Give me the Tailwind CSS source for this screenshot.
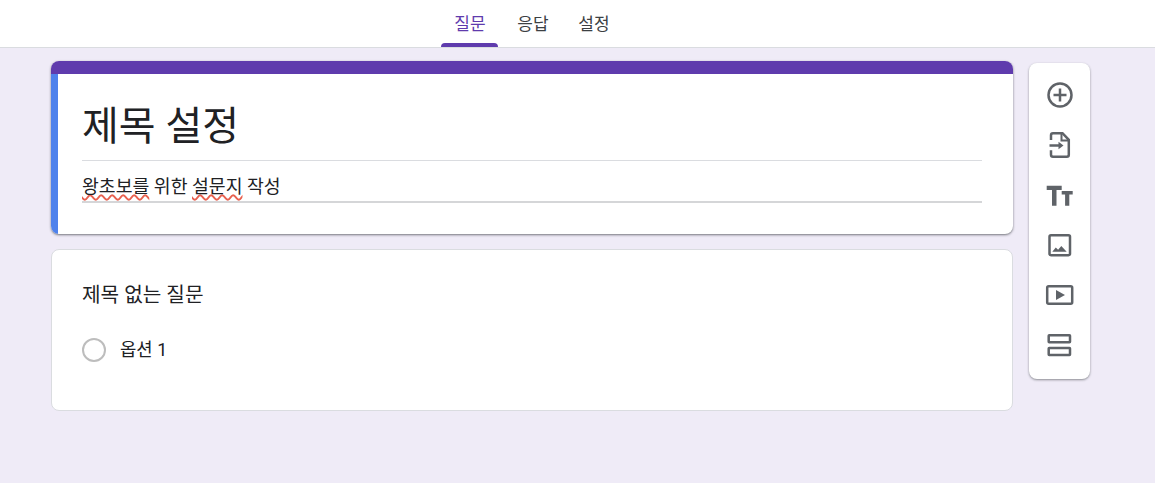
<!DOCTYPE html>
<html lang="ko">
<head>
  <meta charset="UTF-8">
  <title>제목 설정</title>
  <script src="https://cdn.jsdelivr.net/npm/@tailwindcss/browser@4"></script>
</head>
<body class="bg-[#efebf7] h-screen overflow-hidden font-['Roboto','Noto_Sans_CJK_KR',sans-serif] text-[#202124]">

  <!-- Tabs -->
  <header class="bg-white h-[48px] border-b border-[#dadce0] flex justify-center pr-[91px]">
    <nav class="flex gap-[6px]">
      <a class="relative h-[47px] w-[57px] flex justify-center pt-[13px] pl-[2px] text-[17px] leading-[22px] text-[#5f3bad]">질문<span class="absolute bottom-0 left-0 right-0 h-[4px] rounded-t-[4px] bg-[#5f3bad]"></span></a>
      <a class="h-[47px] w-[57px] flex justify-center pt-[13px] pl-[2px] text-[17px] leading-[22px] text-[#3c4043]">응답</a>
      <a class="h-[47px] w-[57px] flex justify-center pt-[13px] pr-[2px] text-[17px] leading-[22px] text-[#3c4043]">설정</a>
    </nav>
  </header>

  <main class="flex items-start pl-[51px] pt-[13px] gap-[16px]">
    <div class="w-[962px] flex flex-col gap-[15px]">

      <!-- Title card -->
      <section class="rounded-[8px] overflow-hidden bg-white shadow-[0_1px_2px_rgba(60,64,67,0.5),0_1px_3px_rgba(60,64,67,0.25)]">
        <div class="h-[13px] bg-[#5f3bad]"></div>
        <div class="h-[160px] border-l-[7px] border-[#4f82ec] pl-[24px] pr-[31px]">
          <h1 class="h-[87px] border-b border-[#dadce0] pt-[30px] text-[40px] leading-[46px] font-normal">제목 설정</h1>
          <p class="h-[42px] border-b-2 border-[#d5d6d8] pt-[14px] text-[18.300px] leading-[24px]"><span class="underline decoration-wavy decoration-[#e8604f] decoration-[1.500px] underline-offset-1">왕초보를</span> 위한 <span class="underline decoration-wavy decoration-[#e8604f] decoration-[1.500px] underline-offset-1">설문지</span> 작성</p>
        </div>
      </section>

      <!-- Question card -->
      <section class="h-[162px] rounded-[8px] bg-white border border-[#dadce0] pl-[30px] pt-[33px]">
        <h2 class="text-[20.200px] leading-[24px] font-normal">제목 없는 질문</h2>
        <div class="flex items-center mt-[31px] gap-[14px]">
          <span class="w-[24px] h-[24px] rounded-full border-2 border-[#bdbdbd]"></span>
          <span class="text-[17.800px] leading-[24px]">옵션 1</span>
        </div>
      </section>
    </div>

    <!-- Floating toolbar -->
    <aside class="mt-[2px] w-[61px] h-[316px] pt-[7px] pl-px rounded-[8px] bg-white flex flex-col items-center shadow-[0_1px_2px_rgba(60,64,67,0.4),0_1px_3px_rgba(60,64,67,0.2)]">
      <div class="h-[50px] flex items-center">
        <svg width="32" height="32" viewBox="0 0 32 32" fill="none" stroke="#5f6368" stroke-width="2.5"><circle cx="16" cy="16" r="11.5"/><path d="M16 9.5v13M9.5 16h13"/></svg>
      </div>
      <div class="h-[50px] flex items-center">
        <svg width="32" height="32" viewBox="0 0 32 32" fill="none" stroke="#5f6368" stroke-width="2.5"><path d="M7 11V6.2a2 2 0 0 1 2-2h9.5l6.3 6.6v15a2 2 0 0 1-2 2H9a2 2 0 0 1-2-2v-4.600"/><path d="M17.500 4.500v7h7" stroke-width="2"/><path d="M5.500 16.500H16"/><path d="M14.500 12.700l5 3.800-5 3.800z" fill="#5f6368" stroke="none"/></svg>
      </div>
      <div class="h-[50px] flex items-center">
        <svg width="32" height="32" viewBox="0 0 32 32" fill="#5f6368"><path d="M2.700 6.700h15V11h-5.200v15.700H8V11H2.700z"/><path d="M17.700 12h11v3.500h-3.400v11.200h-4.200V15.500h-3.400z"/></svg>
      </div>
      <div class="h-[50px] flex items-center">
        <svg width="32" height="32" viewBox="0 0 32 32" fill="none" stroke="#5f6368" stroke-width="2.500"><rect x="5.500" y="6.200" width="20.500" height="20" rx="1.500"/><path d="M8.300 22.700l3.500-4.300 2.300 2.300 3.200-3.700 5.400 5.700z" fill="#5f6368" stroke="none"/></svg>
      </div>
      <div class="h-[50px] flex items-center">
        <svg width="32" height="32" viewBox="0 0 32 32" fill="none" stroke="#5f6368" stroke-width="2.500"><rect x="3.200" y="7.200" width="25" height="17.600" rx="1.500"/><path d="M12 11l9 5-9 5z" fill="#5f6368" stroke="none"/></svg>
      </div>
      <div class="h-[50px] flex items-center">
        <svg width="32" height="32" viewBox="0 0 32 32" fill="none" stroke="#5f6368" stroke-width="2.500"><rect x="4.700" y="6.200" width="21.300" height="7" rx="0.500"/><rect x="4.700" y="18.900" width="21.300" height="7" rx="0.500"/></svg>
      </div>
    </aside>
  </main>

</body>
</html>
